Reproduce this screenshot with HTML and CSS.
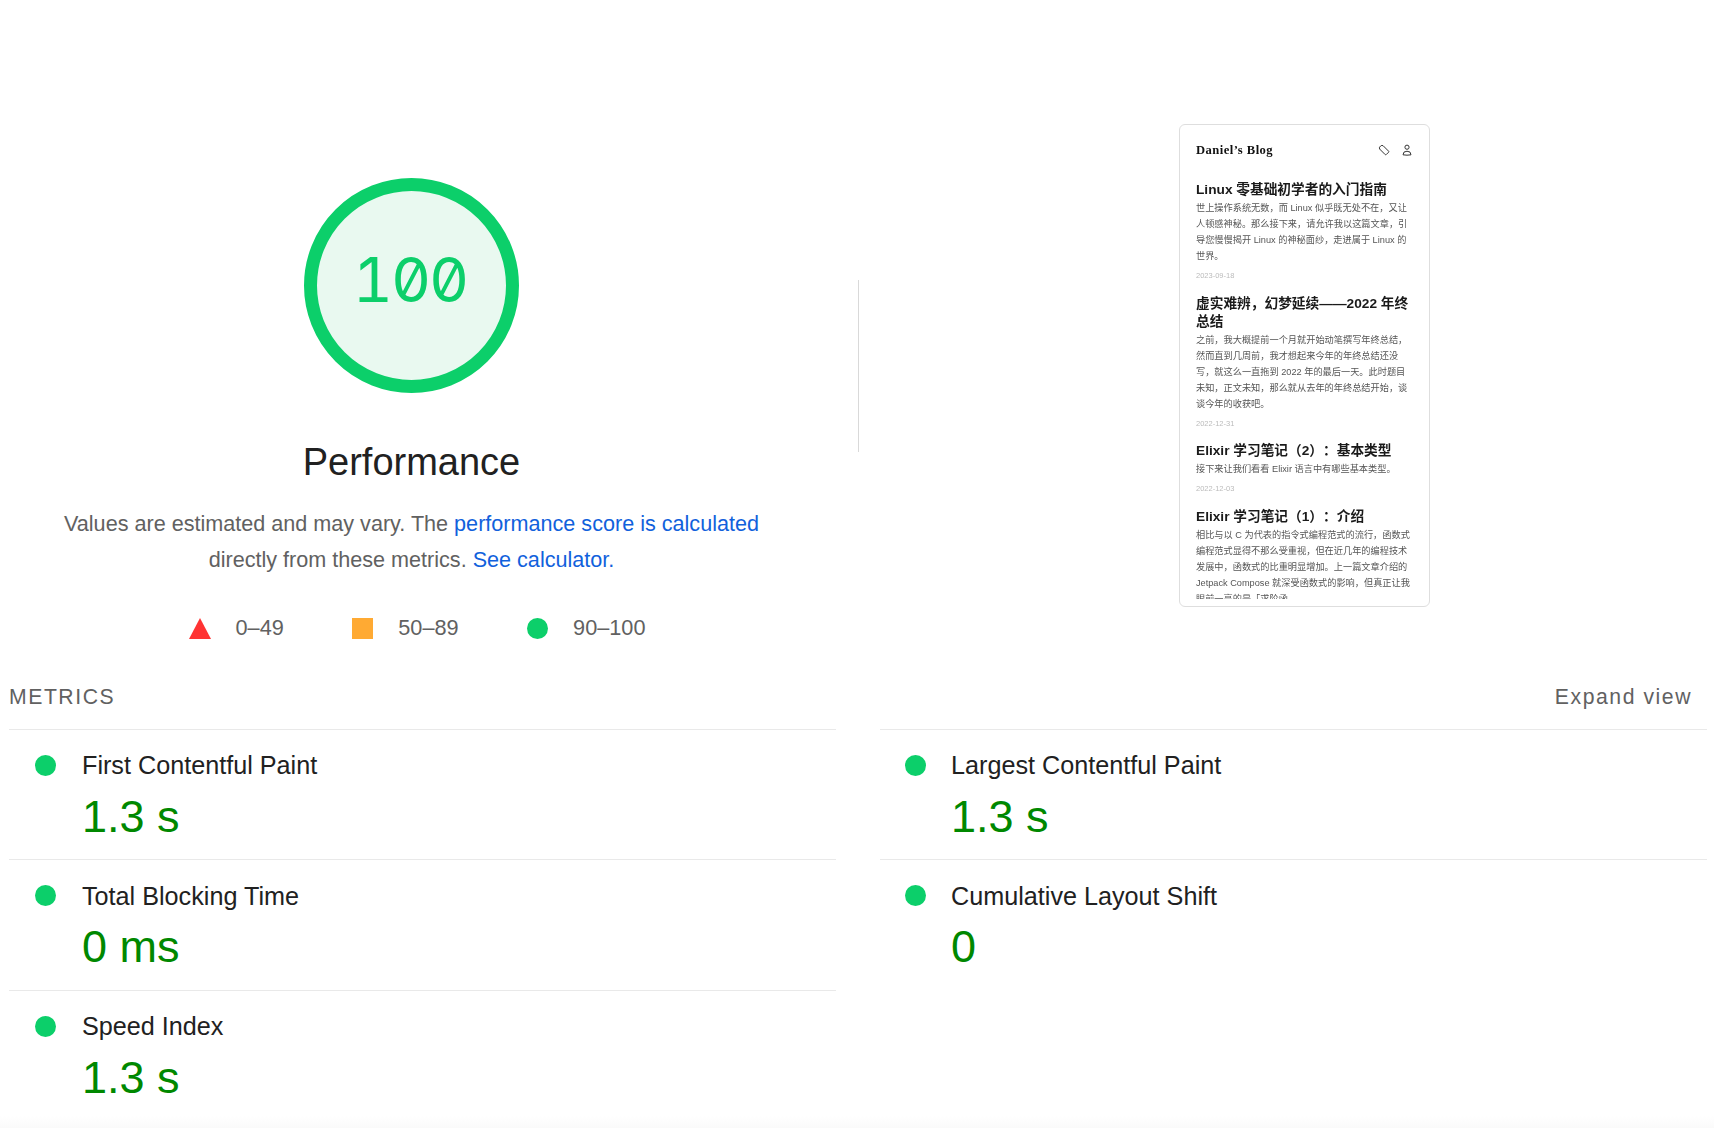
FILE: index.html
```html
<!DOCTYPE html>
<html lang="en">
<head>
<meta charset="utf-8">
<title>Performance</title>
<link rel="stylesheet" href="styles.css">
</head>
<body>
<main class="page">
  <section class="summary">
    <div class="score">
      <svg class="gauge" viewBox="0 0 215 215" width="215" height="215">
        <circle class="gauge-ring" cx="107.5" cy="107.5" r="101"></circle>
        <text class="gauge-text" x="106" y="123.5" text-anchor="middle">100</text>
      </svg>
      <h1 class="score-title">Performance</h1>
      <p class="score-desc">Values are estimated and may vary. The <a href="#">performance score is calculated</a><br>directly from these metrics. <a href="#">See calculator.</a></p>
      <div class="legend">
        <div class="legend-item">
          <svg class="legend-icon" viewBox="0 0 22 21" width="22" height="21"><polygon class="fail" points="11,0 22,21 0,21"></polygon></svg>
          <span>0–49</span>
        </div>
        <div class="legend-item">
          <span class="legend-square"></span>
          <span>50–89</span>
        </div>
        <div class="legend-item">
          <span class="dot"></span>
          <span>90–100</span>
        </div>
      </div>
    </div>
    <div class="vrule"></div>
    <div class="shot">
      <div class="shot-inner">
        <header class="blog-head">
          <span class="blog-name">Daniel’s Blog</span>
          <span class="blog-icons">
            <svg viewBox="0 0 12 12" width="12" height="12"><path d="M1.5 3.2 L3.2 1.5 L5 1.6 L10.6 7.2 Q11 7.7 10.6 8.2 L8.2 10.6 Q7.7 11 7.2 10.6 L1.6 5 Z"></path></svg>
            <svg viewBox="0 0 12 12" width="12" height="12"><circle cx="6" cy="3.2" r="2.1"></circle><path d="M2 10.8 Q2 7.2 6 7.2 Q10 7.2 10 10.8 Q6 11.6 2 10.8 Z"></path></svg>
          </span>
        </header>
        <article class="post">
          <h2>Linux 零基础初学者的入门指南</h2>
          <p>世上操作系统无数，而 Linux 似乎既无处不在，又让人顿感神秘。那么接下来，请允许我以这篇文章，引导您慢慢揭开 Linux 的神秘面纱，走进属于 Linux 的世界。</p>
          <time>2023-09-18</time>
        </article>
        <article class="post">
          <h2>虚实难辨，幻梦延续——2022 年终总结</h2>
          <p>之前，我大概提前一个月就开始动笔撰写年终总结，然而直到几周前，我才想起来今年的年终总结还没写，就这么一直拖到 2022 年的最后一天。此时题目未知，正文未知，那么就从去年的年终总结开始，谈谈今年的收获吧。</p>
          <time>2022-12-31</time>
        </article>
        <article class="post">
          <h2>Elixir 学习笔记（2）：基本类型</h2>
          <p>接下来让我们看看 Elixir 语言中有哪些基本类型。</p>
          <time>2022-12-03</time>
        </article>
        <article class="post">
          <h2>Elixir 学习笔记（1）：介绍</h2>
          <p>相比与以 C 为代表的指令式编程范式的流行，函数式编程范式显得不那么受重视，但在近几年的编程技术发展中，函数式的比重明显增加。上一篇文章介绍的 Jetpack Compose 就深受函数式的影响，但真正让我眼前一亮的是「求阶函</p>
        </article>
      </div>
    </div>
  </section>
  <div class="metrics-head">
    <span>METRICS</span>
    <span>Expand view</span>
  </div>
  <section class="metrics">
    <div class="metric"><span class="dot"></span><span class="metric-label">First Contentful Paint</span><span class="metric-value">1.3 s</span></div>
    <div class="metric"><span class="dot"></span><span class="metric-label">Largest Contentful Paint</span><span class="metric-value">1.3 s</span></div>
    <div class="metric"><span class="dot"></span><span class="metric-label">Total Blocking Time</span><span class="metric-value">0 ms</span></div>
    <div class="metric"><span class="dot"></span><span class="metric-label">Cumulative Layout Shift</span><span class="metric-value">0</span></div>
    <div class="metric"><span class="dot"></span><span class="metric-label">Speed Index</span><span class="metric-value">1.3 s</span></div>
  </section>
</main>
</body>
</html>
```
FILE: styles.css
```css
* { box-sizing: border-box; }
html, body { margin: 0; height: 100%; }
body {
  font-family: "Liberation Sans", Arial, sans-serif;
  overflow: hidden;
  background: linear-gradient(#fff calc(100% - 12px), #fafafa);
}
.page { height: 1128px; display: flex; flex-direction: column; }

.summary { display: flex; height: 674px; padding-top: 124px; }
.score { width: 823px; display: flex; flex-direction: column; align-items: center; }
.gauge { margin-top: 54px; display: block; }
.gauge-ring { fill: #e9f9f0; stroke: #0ccf6a; stroke-width: 13; }
.gauge-text {
  font-family: "Inter", sans-serif; font-weight: 400; font-size: 62px; letter-spacing: -2px;
  font-feature-settings: "tnum", "zero"; fill: #0ccf6a;
}
.score-title { margin: 47px 0 0; font-size: 38px; font-weight: 400; line-height: 44px; color: #212121; }
.score-desc { margin: 22px 0 0; font-size: 21.6px; line-height: 36px; text-align: center; color: #616161; }
.score-desc a { color: #1161dc; text-decoration: none; }
.legend { display: flex; gap: 68.5px; margin: 37px 0 0 11px; font-size: 21.7px; line-height: 26px; color: #616161; }
.legend-item { display: flex; align-items: center; gap: 25px; }
.legend-icon { display: block; }
.fail { fill: #ff3333; }
.legend-square { width: 21px; height: 21px; background: #ffaa33; }
.dot { display: block; width: 21px; height: 21px; border-radius: 50%; background: #0ccf6a; }

.vrule { width: 1px; height: 172px; margin: 156px 0 0 35px; background: #d9d9d9; }

.shot {
  width: 251px; height: 483px; margin-left: 320px; padding: 14px 16px 8px;
  border: 1px solid #dedede; border-radius: 6px; background: #fff;
}
.shot-inner {
  height: 460px; overflow: hidden; filter: blur(0.5px);
  font-family: "Liberation Sans", "Noto Sans CJK SC", sans-serif; text-spacing-trim: space-all;
}
.blog-head { display: flex; justify-content: space-between; align-items: center; height: 22px; }
.blog-name { font-family: "Liberation Serif", "Noto Sans CJK SC", serif; font-weight: 700; font-size: 12.6px; letter-spacing: 0.45px; color: #111; }
.blog-icons { display: flex; gap: 11px; margin-right: 0; }
.blog-icons svg { fill: none; stroke: #333; stroke-width: 1; display: block; }
.post { width: 216px; padding-top: 10.5px; }
.post:first-of-type { padding-top: 20px; }
.post h2 { margin: 0; font-size: 13.7px; line-height: 18px; font-weight: 700; color: #1a1a1a; }
.post p { margin: 1px 0 0; font-size: 9.2px; line-height: 16px; color: #555; }
.post time { display: block; margin-top: 4px; font-size: 7.5px; line-height: 16px; color: #bbb; }

.metrics-head {
  display: flex; justify-content: space-between; align-items: center;
  height: 54.9px; padding: 0 22px 9px 9px; font-size: 21.2px; letter-spacing: 1.55px; color: #616161;
}
.metrics { display: grid; grid-template-columns: 827px 827px; column-gap: 44px; padding-left: 9px; grid-auto-rows: 130.5px; }
.metric {
  display: grid; grid-template-columns: 47px 1fr; padding: 19.6px 0 0 26px; align-content: start;
  border-top: 1px solid #e9e9e9;
}
.metric:nth-child(even) { padding-left: 25px; grid-template-columns: 46px 1fr; }
.metric .dot { align-self: center; }
.metric-label { font-size: 25.2px; line-height: 32px; color: #212121; }
.metric-value { grid-column: 2; margin-top: 9.4px; font-size: 45px; line-height: 52px; color: #008800; }
```
